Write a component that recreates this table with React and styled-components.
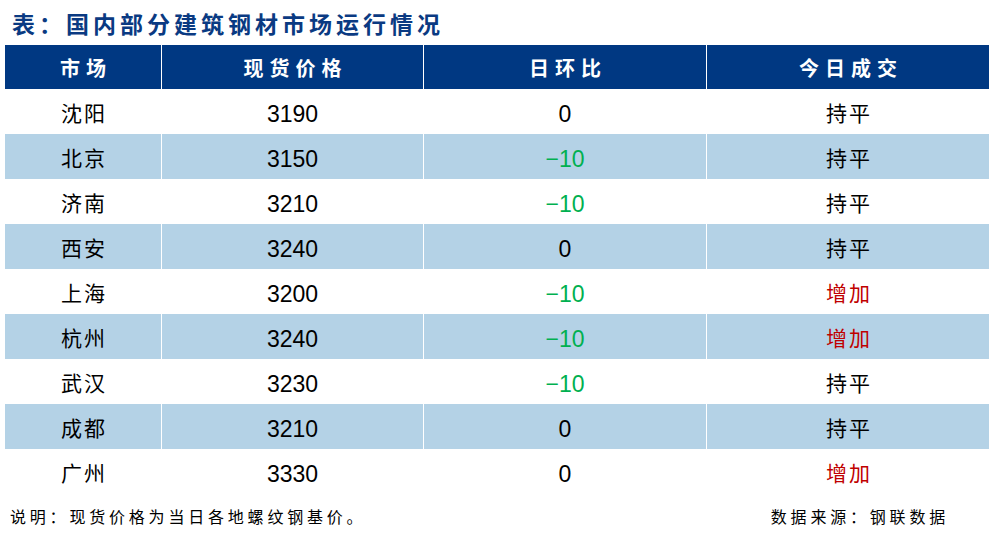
import styled, { createGlobalStyle } from "styled-components";

const GlobalStyle = createGlobalStyle`
  html, body {
    margin: 0;
    padding: 0;
    background: #ffffff;
  }
  body {
    font-family: "Noto Sans CJK SC", "Liberation Sans", sans-serif;
  }
`;

const Page = styled.div`
  width: 995px;
  height: 538px;
  display: flex;
  flex-direction: column;
  padding: 0 6px 0 5px;
  box-sizing: border-box;
`;

const Title = styled.h1`
  margin: 0;
  height: 45px;
  display: flex;
  align-items: center;
  padding-left: 7px;
  font-size: 23px;
  font-weight: 700;
  letter-spacing: 4px;
  color: #0a3a82;
`;

const Table = styled.div`
  display: grid;
  grid-template-columns: 156px 261px 282px 282px;
  column-gap: 1px;
  background: #ffffff;
`;

const HeadCell = styled.div`
  height: 44px;
  display: flex;
  align-items: center;
  justify-content: center;
  background: #003882;
  color: #ffffff;
  font-size: 20px;
  font-weight: 700;
  letter-spacing: 6px;
  padding-left: 6px;
`;

const Cell = styled.div`
  height: 45px;
  box-sizing: border-box;
  display: flex;
  align-items: center;
  justify-content: center;
  background: ${(p) => (p.$shade ? "#b4d2e6" : "#ffffff")};
  color: ${(p) => p.$color || "#000000"};
  font-size: ${(p) => (p.$num ? "23px" : "21px")};
  font-family: ${(p) =>
    p.$num
      ? '"Liberation Sans", Arial, sans-serif'
      : '"Noto Sans CJK SC", sans-serif'};
  letter-spacing: ${(p) => (p.$num ? "0" : "2px")};
  padding: ${(p) => (p.$num ? "6px 0 0 0" : "1px 0 0 2px")};
`;

const Footer = styled.div`
  display: flex;
  justify-content: space-between;
  align-items: center;
  height: 44px;
  padding: 0 40px 0 5px;
  font-size: 16px;
  letter-spacing: 3.8px;
  color: #000000;
`;

const heads = ["市场", "现货价格", "日环比", "今日成交"];

const rows = [
  ["沈阳", 3190, 0, "持平"],
  ["北京", 3150, -10, "持平"],
  ["济南", 3210, -10, "持平"],
  ["西安", 3240, 0, "持平"],
  ["上海", 3200, -10, "增加"],
  ["杭州", 3240, -10, "增加"],
  ["武汉", 3230, -10, "持平"],
  ["成都", 3210, 0, "持平"],
  ["广州", 3330, 0, "增加"],
];

const App = () => {
  return (
    <Page>
      <GlobalStyle />
      <Title>表：国内部分建筑钢材市场运行情况</Title>
      <Table>
        {heads.map((h) => (
          <HeadCell key={h}>{h}</HeadCell>
        ))}
        {rows.map(([city, price, diff, deal], i) => {
          const shade = i % 2 === 1;
          return [
            <Cell key={city + "c"} $shade={shade}>{city}</Cell>,
            <Cell key={city + "p"} $shade={shade} $num>{price}</Cell>,
            <Cell
              key={city + "d"}
              $shade={shade}
              $num
              $color={diff < 0 ? "#00b050" : "#000000"}
            >
              {diff < 0 ? "\u2212" + Math.abs(diff) : diff}
            </Cell>,
            <Cell
              key={city + "t"}
              $shade={shade}
              $color={deal === "增加" ? "#c00000" : "#000000"}
            >
              {deal}
            </Cell>,
          ];
        })}
      </Table>
      <Footer>
        <span>说明：现货价格为当日各地螺纹钢基价。</span>
        <span>数据来源：钢联数据</span>
      </Footer>
    </Page>
  );
};

export default App;
